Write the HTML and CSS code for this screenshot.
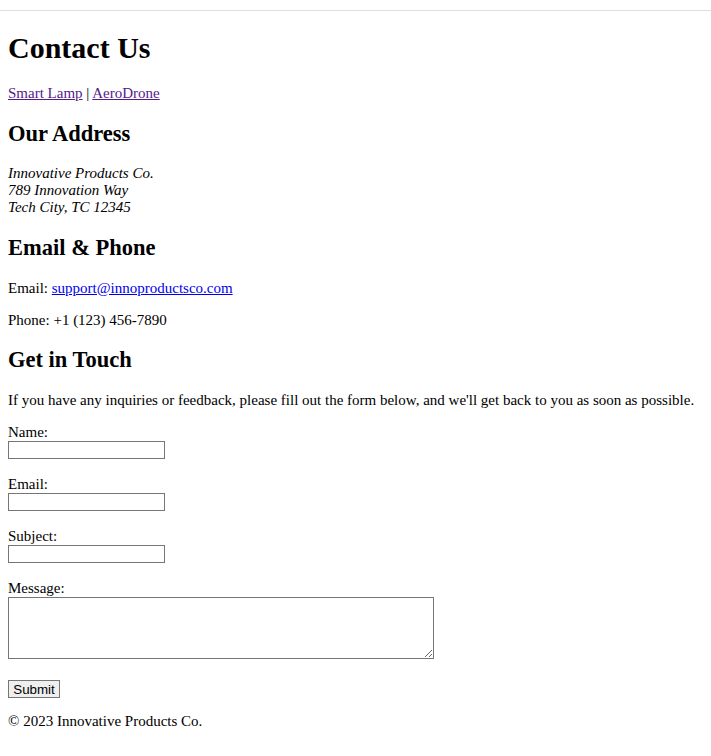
FILE: index.html
```html
<!DOCTYPE html>
<html lang="en">
<head>
<meta charset="utf-8">
<title>Contact Us</title>
<link rel="stylesheet" href="styles.css">
</head>
<body>
<div class="topbar"></div>
<main class="page">
  <h1 class="title">Contact Us</h1>
  <p class="nav"><a class="visited" href="#lamp">Smart Lamp</a> | <a class="visited" href="#drone">AeroDrone</a></p>

  <h2 class="section">Our Address</h2>
  <address class="addr">Innovative Products Co.<br>789 Innovation Way<br>Tech City, TC 12345</address>

  <h2 class="section">Email &amp; Phone</h2>
  <p class="para">Email: <a class="link" href="#mail">support@innoproductsco.com</a></p>
  <p class="para">Phone: +1 (123) 456-7890</p>

  <h2 class="section">Get in Touch</h2>
  <p class="para">If you have any inquiries or feedback, please fill out the form below, and we'll get back to you as soon as possible.</p>

  <form class="form">
    <label class="lbl" for="name">Name:</label>
    <input class="field" type="text" id="name">
    <label class="lbl" for="email">Email:</label>
    <input class="field" type="text" id="email">
    <label class="lbl" for="subject">Subject:</label>
    <input class="field" type="text" id="subject">
    <label class="lbl" for="message">Message:</label>
    <textarea class="area" id="message"></textarea>
    <button class="btn" type="button">Submit</button>
  </form>

  <p class="foot">© 2023 Innovative Products Co.</p>
</main>
</body>
</html>
```
FILE: styles.css
```css
html, body {
  margin: 0;
  padding: 0;
  background: #fff;
}
body {
  font-family: "Liberation Serif", "Times New Roman", serif;
  font-size: 15px;
  line-height: normal;
  color: #000;
}
.topbar {
  height: 10px;
  border-bottom: 1px solid #ddd;
}
.page {
  padding: 0 8px 8px;
}
.title {
  font-size: 30px;
  font-weight: bold;
  margin: 20px 0;
}
.nav, .para, .foot {
  margin: 15px 0;
}
.visited { color: #551a8b; }
.link { color: #0000ee; }
.section {
  font-size: 22.5px;
  font-weight: bold;
  margin: 18.7px 0;
}
.addr {
  font-style: italic;
  margin: 0;
}
.form {
  display: flex;
  flex-direction: column;
  align-items: flex-start;
  margin: 0;
}
.lbl {
  display: block;
}
.field {
  box-sizing: border-box;
  width: 157px;
  height: 18px;
  margin: 0 0 17px;
  border: 1px solid #767676;
  padding: 1px 2px;
  font: 13.33px "Liberation Sans", Arial, sans-serif;
}
.area {
  box-sizing: border-box;
  width: 426px;
  height: 62px;
  margin: 0 0 21px;
  border: 1px solid #767676;
  padding: 2px;
  font: 13.33px "Liberation Mono", monospace;
}
.btn {
  box-sizing: border-box;
  height: 18px;
  width: 52px;
  padding: 0;
  font: 13.33px "Liberation Sans", Arial, sans-serif;
  background: #efefef;
  border: 1px solid #767676;
  border-radius: 0;
  color: #000;
}
```
